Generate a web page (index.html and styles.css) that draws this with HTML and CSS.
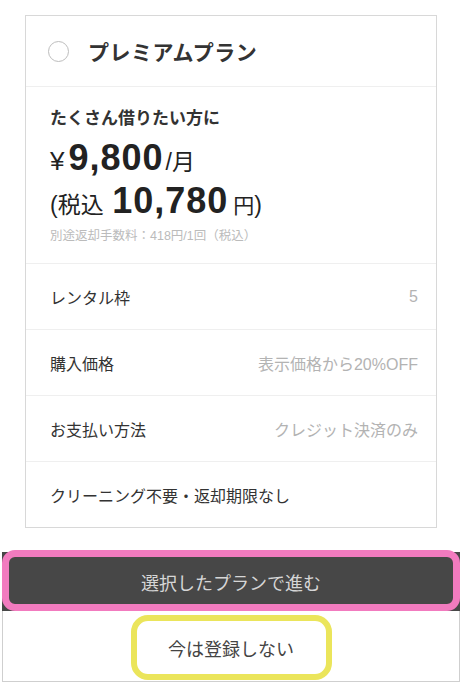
FILE: index.html
```html
<html lang="ja">
  <head>
    <meta charset="utf-8">
    <meta name="viewport" content="width=device-width, initial-scale=1">
    <title>プラン選択</title>
    <link rel="stylesheet" href="styles.css">
  </head>

  <body>
    <div class="card">
      <div class="card-head">
        <span class="radio"></span>
        <h2>プレミアムプラン</h2>
      </div>

      <div class="price-box">
        <p class="lead">たくさん借りたい方に</p>
        <p class="price"><span class="unit yen">¥</span><span class="num">9,800</span><span class="unit">/月</span></p>
        <p class="price"><span class="unit">(税込</span> <span class="num">10,780</span><span class="unit small">円</span><span class="unit">)</span></p>
        <p class="note">別途返却手数料：418円/1回（税込）</p>
      </div>

      <div class="row">
        <span class="label">レンタル枠</span>
        <span class="value">5</span>
      </div>
      <div class="row">
        <span class="label">購入価格</span>
        <span class="value">表示価格から20%OFF</span>
      </div>
      <div class="row">
        <span class="label">お支払い方法</span>
        <span class="value">クレジット決済のみ</span>
      </div>
      <div class="row">
        <span class="label">クリーニング不要・返却期限なし</span>
      </div>
    </div>

    <div class="actions">
      <div class="btn-main">選択したプランで進む</div>
      <div class="btn-skip">
        <span class="skip-mark">今は登録しない</span>
      </div>
    </div>
  </body>
</html>
```

FILE: styles.css
```css
* {
  box-sizing: border-box;
}

body {
  margin: 0;
  padding-top: 15px;
  background: #fff;
  color: #333;
  font-family: "Liberation Sans", "Noto Sans CJK JP", sans-serif;
}

p, h2 {
  margin: 0;
}

.card {
  margin: 0 25px;
  border: 1px solid #d8d8d8;
}

.card-head {
  display: flex;
  align-items: center;
  height: 71px;
  padding-left: 22px;
  border-bottom: 1px solid #efefef;
}

.radio {
  width: 21px;
  height: 21px;
  border: 1.5px solid #bdbdbd;
  border-radius: 50%;
  margin-right: 19px;
}

.card-head h2 {
  font-size: 21px;
  font-weight: 700;
  color: #333;
  letter-spacing: 0.5px;
}

.price-box {
  padding: 20px 19px 19px 24px;
}

.lead {
  font-size: 17px;
  font-weight: 700;
  line-height: 24px;
}

.price {
  height: 40px;
  line-height: 40px;
  margin-top: 9px;
  color: #222;
}

.price + .price {
  margin-top: 3px;
}

.price span {
  line-height: 1;
}

.price .unit {
  font-size: 23px;
}

.price .unit.yen {
  font-size: 26px;
}

.price .unit.small {
  font-size: 21px;
  margin-left: 3px;
}

.price .num {
  font-size: 36px;
  font-weight: 700;
  letter-spacing: 1px;
  margin: 0 2px 0 4px;
}

.note {
  margin-top: 5px;
  font-size: 12.5px;
  line-height: 16px;
  color: #bbb;
}

.row {
  display: flex;
  justify-content: space-between;
  align-items: center;
  height: 66px;
  padding: 0 18px 0 24px;
  border-top: 1px solid #efefef;
  font-size: 16px;
}

.row .label {
  color: #333;
}

.row .value {
  color: #b3b3b3;
}

.actions {
  margin: 24px 2px 0;
}

.btn-main {
  position: relative;
  display: flex;
  align-items: center;
  justify-content: center;
  height: 59px;
  background: #474747;
  color: #d6d6d6;
  font-size: 18px;
}

/* pink highlight ring drawn over the button */
.btn-main::after {
  content: "";
  position: absolute;
  top: -2px;
  left: 0;
  right: 0;
  bottom: 0;
  border: 7px solid #f27bbf;
  border-radius: 13px;
}

.btn-skip {
  display: flex;
  justify-content: center;
  align-items: flex-start;
  height: 71px;
  padding-top: 4px;
  border: 1px solid #cfcfcf;
  border-top: none;
}

.skip-mark {
  display: flex;
  align-items: center;
  justify-content: center;
  width: 201px;
  height: 65px;
  border: 6px solid #ebe55b;
  border-radius: 17px;
  font-size: 18px;
  color: #444;
}
```
